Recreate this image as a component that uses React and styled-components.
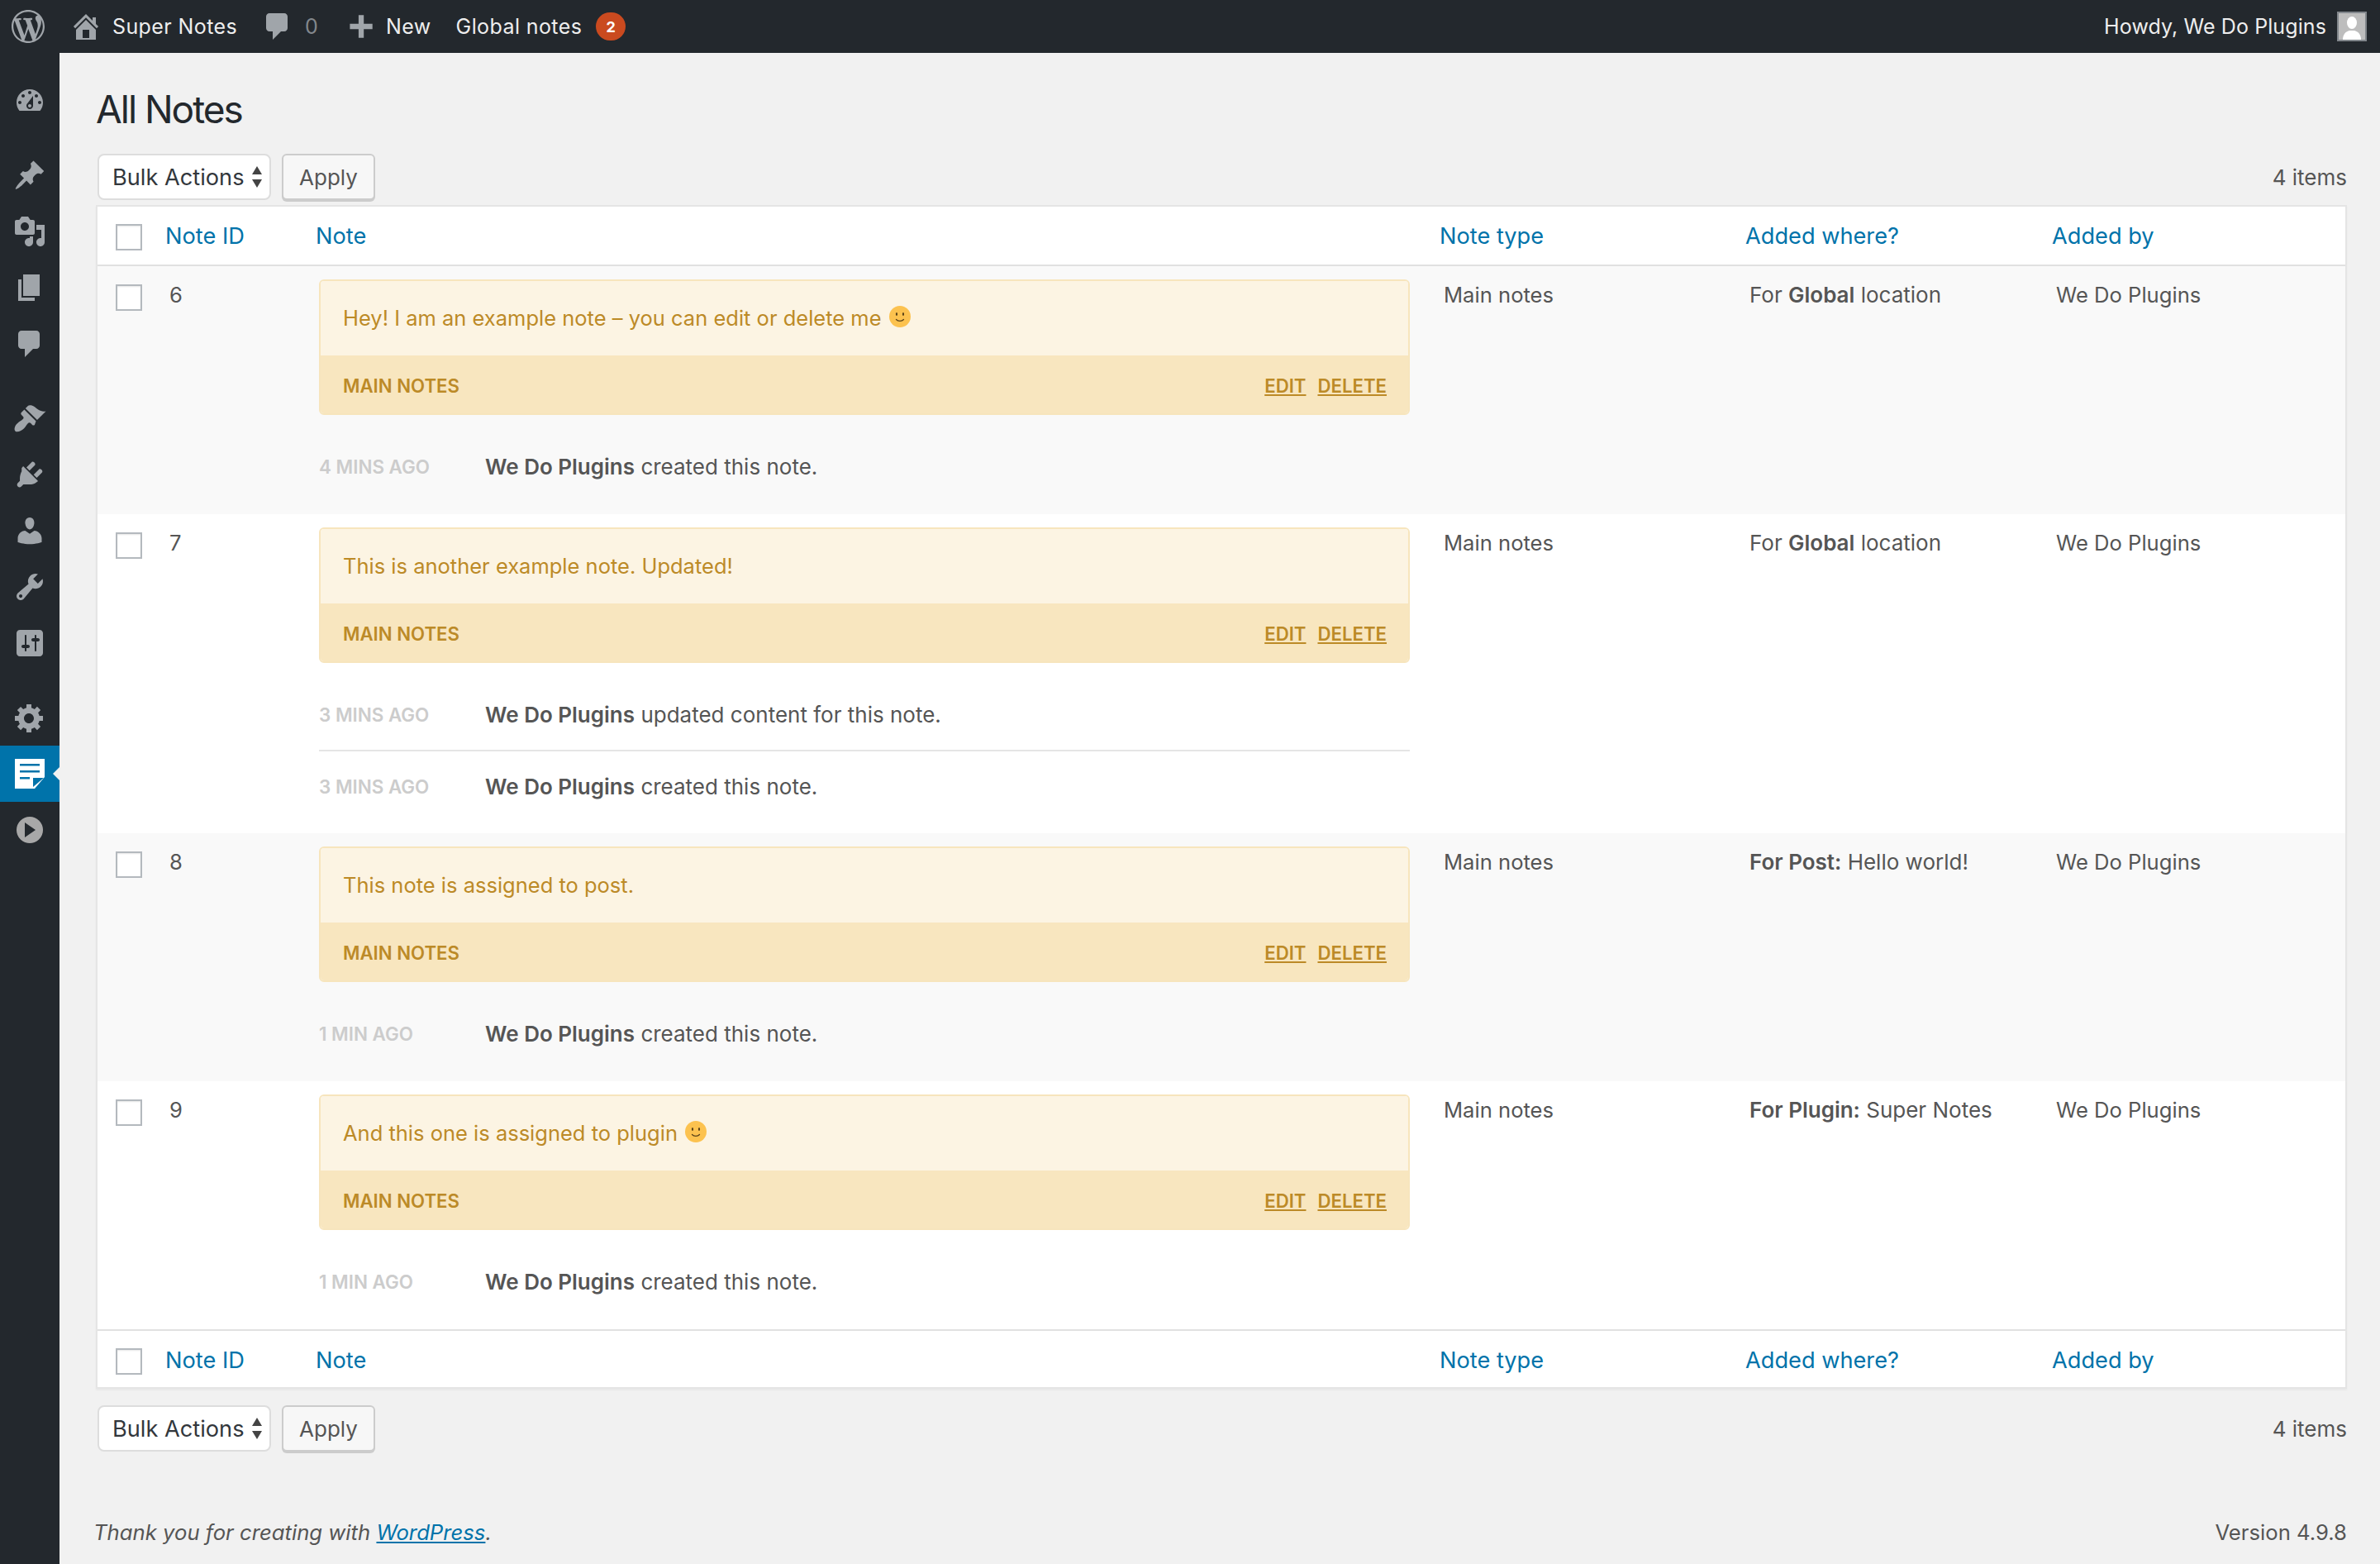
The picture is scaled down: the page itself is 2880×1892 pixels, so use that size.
import React from "react";
import styled, { createGlobalStyle } from "styled-components";

const FONT = `Inter, "Liberation Sans", sans-serif`;
const COLS = "62px 182px 1360px 370px 371px 1fr";

const Global = createGlobalStyle`
  html, body { margin: 0; padding: 0; background: #f1f1f1; }
  body { font-family: ${FONT}; font-size: 26px; color: #555; -webkit-font-smoothing: antialiased; }
  * { box-sizing: border-box; }
`;

const Page = styled.div`
  width: 2880px;
  height: 1892px;
  display: flex;
  flex-direction: column;
  overflow: hidden;
`;

/* ---------- admin bar ---------- */
const AdminBar = styled.header`
  height: 64px;
  flex: none;
  background: #23282d;
  color: #eee;
  display: flex;
  align-items: center;
  padding: 0 16px 0 14px;
  font-size: 25px;
  letter-spacing: 0.1px;
`;
const BarGroup = styled.div`
  display: flex;
  align-items: center;
  margin-left: ${(p) => (p.$end ? "auto" : "0")};
`;
const BarIcon = styled.svg`
  width: ${(p) => p.$size || 40}px;
  height: ${(p) => p.$size || 40}px;
  margin-right: ${(p) => p.$mr || 0}px;
  fill: #a0a5aa;
  flex: none;
`;
const BarText = styled.span`
  margin-right: ${(p) => p.$mr || 0}px;
  color: ${(p) => (p.$muted ? "#82878c" : "#eee")};
  letter-spacing: ${(p) => (p.$wide ? "0.4px" : "0.1px")};
  white-space: nowrap;
`;
const Badge = styled.span`
  width: 36px;
  height: 34px;
  border-radius: 17px;
  background: #ca4a1f;
  color: #fff;
  font-size: 18px;
  font-weight: 700;
  display: flex;
  align-items: center;
  justify-content: center;
`;
const Avatar = styled.span`
  width: 36px;
  height: 36px;
  border: 2px solid #82878c;
  background: #bdbdbd;
  margin-left: 13px;
  display: flex;
  overflow: hidden;
`;

/* ---------- sidebar ---------- */
const Body = styled.div`
  flex: 1;
  display: flex;
  min-height: 0;
`;
const Sidebar = styled.nav`
  width: 72px;
  flex: none;
  background: #23282d;
  padding-top: 24px;
  display: flex;
  flex-direction: column;
`;
const MenuItem = styled.div`
  height: 68px;
  flex: none;
  display: flex;
  align-items: center;
  justify-content: center;
  position: relative;
  padding-right: 1px;
  background: ${(p) => (p.$active ? "#0073aa" : "transparent")};
  svg { width: 40px; height: 40px; fill: #a0a5aa; }
  ${(p) => p.$active && `
    svg.note { width: 36px; height: 36px; fill: #fff; }
    &::after {
      content: "";
      position: absolute;
      right: 0;
      top: 50%;
      margin-top: -8px;
      border: 8px solid transparent;
      border-right-color: #f1f1f1;
    }
  `}
`;
const MenuGap = styled.div`
  height: 22px;
  flex: none;
`;

/* ---------- main ---------- */
const Main = styled.main`
  flex: 1;
  min-width: 0;
  padding: 0 40px 0 44px;
  display: flex;
  flex-direction: column;
`;
const Title = styled.h1`
  margin: 0;
  padding-top: 38px;
  height: 122px;
  font-size: 46px;
  line-height: 60px;
  font-weight: 400;
  color: #23282d;
  letter-spacing: -2px;
`;
const Toolbar = styled.div`
  height: 62px;
  flex: none;
  display: flex;
  align-items: flex-start;
  padding-left: 2px;
`;
const SelectBox = styled.div`
  width: 210px;
  height: 56px;
  background: #fff;
  border: 2px solid #ddd;
  border-radius: 8px;
  color: #32373c;
  font-size: 27.2px;
  display: flex;
  align-items: center;
  padding: 0 8px 0 16px;
  justify-content: space-between;
  white-space: nowrap;
`;
const Arrows = styled.svg`
  width: 14px;
  height: 26px;
  fill: #444;
  flex: none;
`;
const ApplyButton = styled.button`
  width: 113px;
  height: 56px;
  margin-left: 13px;
  background: #f7f7f7;
  border: 2px solid #ccc;
  border-radius: 6px;
  box-shadow: 0 2px 0 #ccc;
  color: #555;
  font-family: ${FONT};
  font-size: 26px;
  padding: 0;
`;
const Count = styled.div`
  margin-left: auto;
  height: 56px;
  display: flex;
  align-items: center;
  font-size: 26px;
  color: #555;
`;
const BottomSpace = styled.div`
  height: 20px;
  flex: none;
`;
const Table = styled.div`
  border: 2px solid #e5e5e5;
  box-shadow: 0 2px 2px rgba(0, 0, 0, 0.04);
  background: #fff;
  flex: none;
`;
const HeadRow = styled.div`
  height: ${(p) => (p.$foot ? 70 : 72)}px;
  padding-top: ${(p) => (p.$foot ? 6 : 4)}px;
  display: grid;
  grid-template-columns: ${COLS};
  align-items: center;
  ${(p) => (p.$foot ? "border-top: 2px solid #e1e1e1;" : "border-bottom: 2px solid #e1e1e1;")}
`;
const HeadCell = styled.div`
  padding: 0 0 3px 20px;
  color: #0073aa;
  font-size: 27.2px;
`;
const CheckCell = styled.div`
  padding-left: 22px;
  padding-top: ${(p) => (p.$top ? 6 : 0)}px;
  display: flex;
  align-items: ${(p) => (p.$top ? "flex-start" : "center")};
`;
const Check = styled.input.attrs({ type: "checkbox" })`
  appearance: none;
  margin: 0;
  width: 32px;
  height: 32px;
  background: #fff;
  border: 2px solid #b4b9be;
  box-shadow: inset 0 1px 2px rgba(0, 0, 0, 0.1);
  display: block;
`;
const Row = styled.div`
  display: grid;
  grid-template-columns: ${COLS};
  align-items: start;
  padding: 16px 0 14px;
  background: ${(p) => (p.$alt ? "#f9f9f9" : "#fff")};
`;
const Cell = styled.div`
  padding-left: 25px;
  line-height: 38px;
  font-size: ${(p) => (p.$where ? 26 : 25.6)}px;
  color: #555;
  b { font-weight: 600; }
`;
const NoteCell = styled.div`
  padding-left: 24px;
  min-width: 0;
`;
const Card = styled.div`
  width: 1320px;
  height: 164px;
  border: 2px solid #f7e5bd;
  border-radius: 6px;
  overflow: hidden;
  color: #bc8a27;
  display: flex;
  flex-direction: column;
`;
const CardBody = styled.div`
  height: 90px;
  flex: none;
  background: #fcf4e3;
  padding: 0 27px 2px;
  display: flex;
  align-items: center;
  gap: 9px;
  font-size: 25.5px;
`;
const CardFoot = styled.div`
  flex: 1;
  background: #f8e6bf;
  padding: 2px 26px 0 27px;
  display: flex;
  align-items: center;
  justify-content: space-between;
  font-size: 22.2px;
  font-weight: 600;
  text-transform: uppercase;
`;
const CardLinks = styled.div`
  display: flex;
  gap: 14px;
  text-decoration: underline;
`;
const Smile = styled.svg`
  width: 26px;
  height: 26px;
  flex: none;
  position: relative;
  top: -1px;
`;
const LogList = styled.div`
  width: 1320px;
  margin-top: 20px;
`;
const LogItem = styled.div`
  height: ${(p) => p.$h}px;
  padding-bottom: 1px;
  display: flex;
  align-items: center;
  & + & { border-top: 2px solid #e5e5e5; }
`;
const LogTime = styled.span`
  width: 201px;
  flex: none;
  color: #ccc;
  font-size: 22.4px;
  font-weight: 600;
  text-transform: uppercase;
`;
const LogText = styled.span`
  font-size: 26px;
  color: #555;
  b { font-weight: 600; }
`;
const Footer = styled.footer`
  margin-top: auto;
  height: 54px;
  display: flex;
  justify-content: space-between;
  font-size: 25.7px;
  color: #555;
  a { color: #0073aa; text-decoration: underline; }
`;
const Thanks = styled.em`
  font-style: italic;
  margin-left: -3px;
`;

/* ---------- icons ---------- */
const P = {
  wp: "M20 10c0-5.51-4.49-10-10-10C4.48 0 0 4.49 0 10c0 5.52 4.48 10 10 10 5.51 0 10-4.48 10-10zM7.78 15.37L4.37 6.22c.55-.02 1.17-.08 1.17-.08.5-.06.44-1.13-.06-1.11 0 0-1.45.11-2.37.11-.18 0-.37 0-.58-.01C4.12 2.69 6.87 1.11 10 1.11c2.33 0 4.45.87 6.05 2.34-.68-.11-1.65.39-1.65 1.58 0 .74.45 1.36.9 2.1.35.61.55 1.36.55 2.46 0 1.49-1.4 5-1.4 5l-3.03-8.37c.54-.02.82-.17.82-.17.5-.05.44-1.25-.06-1.22 0 0-1.44.12-2.38.12-.87 0-2.33-.12-2.33-.12-.5-.03-.56 1.2-.06 1.22l.92.08 1.26 3.41zM17.41 10c.24-.64.74-1.87.43-4.25.7 1.29 1.05 2.71 1.05 4.25 0 3.29-1.73 6.24-4.4 7.78.97-2.59 1.94-5.2 2.92-7.78zM6.1 18.09C3.12 16.65 1.11 13.53 1.11 10c0-1.3.23-2.48.72-3.59C3.25 10.3 4.67 14.2 6.1 18.09zm4.03-6.63l2.58 6.98c-.86.29-1.76.45-2.71.45-.79 0-1.57-.11-2.29-.33.81-2.38 1.62-4.74 2.42-7.1z",
  home: "M16 8.5l1.53 1.53-1.06 1.06L10 4.62l-6.47 6.47-1.06-1.06L10 2.5l4 4v-2h2v4zm-6-2.46l6 5.99V18H4v-5.97zM12 17v-5H8v5h4z",
  comment: "M5 2h9c1.1 0 2 .9 2 2v7c0 1.1-.9 2-2 2h-2l-5 5v-5H5c-1.1 0-2-.9-2-2V4c0-1.1.9-2 2-2z",
  plus: "M17 7v3h-5v5H9v-5H4V7h5V2h3v5h5z",
  dashboard: "M3.76 16h12.48c1.1-1.37 1.76-3.11 1.76-5 0-4.42-3.58-8-8-8s-8 3.58-8 8c0 1.89.66 3.63 1.76 5zM10 4c.55 0 1 .45 1 1s-.45 1-1 1-1-.45-1-1 .45-1 1-1zM6 6c.55 0 1 .45 1 1s-.45 1-1 1-1-.45-1-1 .45-1 1-1zm8 0c.55 0 1 .45 1 1s-.45 1-1 1-1-.45-1-1 .45-1 1-1zm-5.37 5.55L12 7v6c0 1.1-.9 2-2 2s-2-.9-2-2c0-.57.24-1.08.63-1.45zM4 10c.55 0 1 .45 1 1s-.45 1-1 1-1-.45-1-1 .45-1 1-1zm12 0c.55 0 1 .45 1 1s-.45 1-1 1-1-.45-1-1 .45-1 1-1zm-5 3c0-.55-.45-1-1-1s-1 .45-1 1 .45 1 1 1 1-.45 1-1z",
  pin: "M10.44 3.02l1.82-1.82 6.36 6.35-1.83 1.82c-1.05-.68-2.48-.57-3.41.36l-.75.75c-.92.93-1.04 2.35-.35 3.41l-1.83 1.82-2.41-2.41-2.8 2.79c-.42.42-3.38 2.71-3.8 2.29s1.86-3.39 2.28-3.81l2.79-2.79L4.1 9.36l1.83-1.82c1.05.69 2.48.57 3.4-.36l.75-.75c.93-.92 1.05-2.35.36-3.41z",
  media: "M13 11V4c0-.55-.45-1-1-1h-1.67L9 1H5L3.67 3H2c-.55 0-1 .45-1 1v7c0 .55.45 1 1 1h10c.55 0 1-.45 1-1zM7 4.5c1.38 0 2.5 1.12 2.5 2.5S8.38 9.5 7 9.5 4.5 8.38 4.5 7 5.62 4.5 7 4.5zM14 6h5v10.5c0 1.38-1.12 2.5-2.5 2.5S14 17.88 14 16.5s1.12-2.5 2.5-2.5c.17 0 .34.02.5.05V9h-3V6zm-4 8.05V13h2v3.5c0 1.38-1.12 2.5-2.5 2.5S7 17.88 7 16.5 8.12 14 9.5 14c.17 0 .34.02.5.05z",
  page: "M6 15V2h10v13H6zm-1 1h8v2H3V5h2v11z",
  appearance: "M14.48 11.06L7.41 3.99l1.5-1.5c.5-.56 2.3-.47 3.51.32 1.21.8 1.43 1.28 2.91 2.1 1.18.64 2.45 1.26 4.45.85zm-.71.71L6.7 4.7 4.93 6.47c-.39.39-.39 1.02 0 1.41l1.06 1.06c.39.39.39 1.03 0 1.42-.6.6-1.43 1.11-2.21 1.69-.35.26-.7.53-1.01.84C1.43 13.71.05 16.54 1.2 17.69c1.15 1.15 3.99-.24 5.33-1.57.3-.31.59-.66.85-1.02.57-.78 1.08-1.61 1.69-2.21.39-.39 1.02-.39 1.41 0l1.06 1.06c.39.39 1.02.39 1.41 0z",
  plugin: "M13.11 4.36L9.87 7.6 8 5.73l3.24-3.24c.35-.34 1.05-.2 1.56.32.52.51.66 1.21.31 1.55zm-8 1.77l.91-1.12 9.01 9.01-1.19.84c-.71.71-2.63 1.16-3.82 1.16H6.14L4.9 17.26c-.59.59-1.54.59-2.12 0-.59-.58-.59-1.53 0-2.12l1.24-1.24v-1.72c0-1.19.46-3.11 1.09-4.11zm7.26 3.97l3.24-3.24c.34-.35 1.04-.21 1.55.31.52.51.66 1.21.31 1.55l-3.24 3.25z",
  users: "M10 9.25c-2.27 0-2.73-3.44-2.73-3.44C7 4.02 7.82 2 9.97 2c2.16 0 2.98 2.02 2.71 3.81 0 0-.41 3.44-2.68 3.44zm0 2.57L12.72 10c2.39 0 4.52 2.33 4.52 4.53v2.49s-3.65 1.13-7.24 1.13c-3.65 0-7.24-1.13-7.24-1.13v-2.49c0-2.25 1.94-4.48 4.47-4.48z",
  tools: "M16.68 9.77c-1.34 1.34-3.3 1.67-4.95.99l-5.41 6.52c-.99.99-2.59.99-3.58 0s-.99-2.59 0-3.57l6.52-5.42c-.68-1.65-.35-3.61.99-4.95 1.28-1.28 3.12-1.62 4.72-1.06l-2.89 2.89 2.82 2.82 2.86-2.87c.53 1.58.18 3.39-1.08 4.65zM3.81 16.21c.4.39 1.04.39 1.43 0 .4-.4.4-1.04 0-1.43-.39-.4-1.03-.4-1.43 0-.39.39-.39 1.03 0 1.43z",
  sliders: "M18 16V4c0-1.1-.9-2-2-2H4c-1.1 0-2 .9-2 2v12c0 1.1.9 2 2 2h12c1.1 0 2-.9 2-2zM8 11h1c.55 0 1 .45 1 1s-.45 1-1 1H8v1.5c0 .28-.22.5-.5.5s-.5-.22-.5-.5V13H6c-.55 0-1-.45-1-1s.45-1 1-1h1V5.5c0-.28.22-.5.5-.5s.5.22.5.5V11zm5-2h-1c-.55 0-1-.45-1-1s.45-1 1-1h1V5.5c0-.28.22-.5.5-.5s.5.22.5.5V7h1c.55 0 1 .45 1 1s-.45 1-1 1h-1v5.5c0 .28-.22.5-.5.5s-.5-.22-.5-.5V9z",
  gear: "M18 12h-2.18c-.17.7-.44 1.35-.81 1.93l1.54 1.54-2.1 2.1-1.54-1.54c-.58.36-1.23.63-1.91.79V19H8v-2.18c-.68-.16-1.33-.43-1.91-.79l-1.54 1.54-2.12-2.12 1.54-1.54c-.36-.58-.63-1.23-.79-1.91H1V9.03h2.17c.16-.7.44-1.35.8-1.94L2.43 5.55l2.1-2.1 1.54 1.54c.58-.37 1.24-.64 1.93-.81V2h3v2.18c.68.16 1.33.43 1.91.79l1.54-1.54 2.12 2.12-1.54 1.54c.36.59.64 1.24.8 1.94H18V12zm-8.5 1.5c1.66 0 3-1.34 3-3s-1.34-3-3-3-3 1.34-3 3 1.34 3 3 3z",
};

const Dash = ({ name }) => (
  <svg viewBox="0 0 20 20"><path fillRule="evenodd" d={P[name]} /></svg>
);

const NoteIcon = () => (
  <svg className="note" viewBox="0 0 36 36">
    <path d="M0 0h36v22L24 36H0z" />
    <path d="M6 6h24v2.4H6zM6 14h24v2.4H6zM6 22h12v2.4H6z" fill="#0073aa" />
    <path d="M22 23h13L22 34z" fill="#0073aa" />
  </svg>
);

const PlayIcon = () => (
  <svg viewBox="0 0 40 40">
    <circle cx="20" cy="20" r="16" fill="#a8a8a8" />
    <path d="M14 11l13 9-13 9z" fill="#23282d" />
  </svg>
);

const Emoji = () => (
  <Smile viewBox="0 0 26 26">
    <circle cx="13" cy="13" r="13" fill="#fcc24f" />
    <ellipse cx="9" cy="10" rx="1.1" ry="1.9" fill="#5b4319" />
    <ellipse cx="17" cy="10" rx="1.1" ry="1.9" fill="#5b4319" />
    <path d="M8.5 16.5c2 2.4 7 2.4 9 0" fill="none" stroke="#5b4319" strokeWidth="1.3" strokeLinecap="round" />
  </Smile>
);

const BulkBar = () => (
  <Toolbar>
    <SelectBox>
      Bulk Actions
      <Arrows viewBox="0 0 14 26"><path d="M7 0l6 10H1zM7 26L1 16h12z" /></Arrows>
    </SelectBox>
    <ApplyButton>Apply</ApplyButton>
    <Count>4 items</Count>
  </Toolbar>
);

const HeadCells = ({ foot }) => (
  <HeadRow $foot={foot}>
    <CheckCell><Check /></CheckCell>
    <HeadCell>Note ID</HeadCell>
    <HeadCell>Note</HeadCell>
    <HeadCell>Note type</HeadCell>
    <HeadCell>Added where?</HeadCell>
    <HeadCell>Added by</HeadCell>
  </HeadRow>
);

const ROWS = [
  {
    id: 6, alt: true, text: "Hey! I am an example note – you can edit or delete me", smile: true,
    where: <>For <b>Global</b> location</>,
    logs: [["4 mins ago", "created this note."]],
  },
  {
    id: 7, text: "This is another example note. Updated!",
    where: <>For <b>Global</b> location</>,
    logs: [["3 mins ago", "updated content for this note."], ["3 mins ago", "created this note."]],
  },
  {
    id: 8, alt: true, text: "This note is assigned to post.",
    where: <><b>For Post:</b> Hello world!</>,
    logs: [["1 min ago", "created this note."]],
  },
  {
    id: 9, text: "And this one is assigned to plugin", smile: true,
    where: <><b>For Plugin:</b> Super Notes</>,
    logs: [["1 min ago", "created this note."]],
  },
];

const MENU = [
  "dashboard", null, "pin", "media", "page", "comment", null,
  "appearance", "plugin", "users", "tools", "sliders", null, "gear",
];

const logHeight = (count, i) => (count > 1 ? (i === 0 ? 85 : 87) : 86);

export default function App() {
  return (
    <Page>
      <Global />
      <AdminBar>
        <BarGroup>
          <BarIcon viewBox="0 0 20 20" $mr={30}><path d={P.wp} fillRule="evenodd" /></BarIcon>
          <BarIcon viewBox="0 0 20 20" $mr={12}><path d={P.home} fillRule="evenodd" /></BarIcon>
          <BarText $wide $mr={29}>Super Notes</BarText>
          <BarIcon viewBox="0 0 20 20" $mr={13}><path d={P.comment} /></BarIcon>
          <BarText $muted $mr={30}>0</BarText>
          <BarIcon viewBox="0 -1.5 20 20" $size={42} $mr={10}><path d={P.plus} /></BarIcon>
          <BarText $wide $mr={30}>New</BarText>
          <BarText $wide $mr={17}>Global notes</BarText>
          <Badge>2</Badge>
        </BarGroup>
        <BarGroup $end>
          <BarText>Howdy, We Do Plugins</BarText>
          <Avatar>
            <svg viewBox="0 0 32 32" width="32" height="32" fill="#fff">
              <ellipse cx="16" cy="11.5" rx="6" ry="7.5" />
              <path d="M5 32c0-7 4-10 8-11h6c4 1 8 4 8 11z" />
            </svg>
          </Avatar>
        </BarGroup>
      </AdminBar>
      <Body>
        <Sidebar>
          {MENU.map((m, i) =>
            m ? <MenuItem key={i}><Dash name={m} /></MenuItem> : <MenuGap key={i} />
          )}
          <MenuItem $active><NoteIcon /></MenuItem>
          <MenuItem><PlayIcon /></MenuItem>
        </Sidebar>
        <Main>
          <Title>All Notes</Title>
          <BulkBar />
          <Table>
            <HeadCells />
            {ROWS.map((r) => (
              <Row key={r.id} $alt={r.alt}>
                <CheckCell $top><Check /></CheckCell>
                <Cell>{r.id}</Cell>
                <NoteCell>
                  <Card>
                    <CardBody>{r.text}{r.smile && <Emoji />}</CardBody>
                    <CardFoot>
                      <span>Main notes</span>
                      <CardLinks><span>Edit</span><span>Delete</span></CardLinks>
                    </CardFoot>
                  </Card>
                  <LogList>
                    {r.logs.map((l, i) => (
                      <LogItem key={i} $h={logHeight(r.logs.length, i)}>
                        <LogTime>{l[0]}</LogTime>
                        <LogText><b>We Do Plugins</b> {l[1]}</LogText>
                      </LogItem>
                    ))}
                  </LogList>
                </NoteCell>
                <Cell>Main notes</Cell>
                <Cell $where>{r.where}</Cell>
                <Cell>We Do Plugins</Cell>
              </Row>
            ))}
            <HeadCells foot />
          </Table>
          <BottomSpace />
          <BulkBar />
          <Footer>
            <Thanks>Thank you for creating with <a>WordPress</a>.</Thanks>
            <span>Version 4.9.8</span>
          </Footer>
        </Main>
      </Body>
    </Page>
  );
}
